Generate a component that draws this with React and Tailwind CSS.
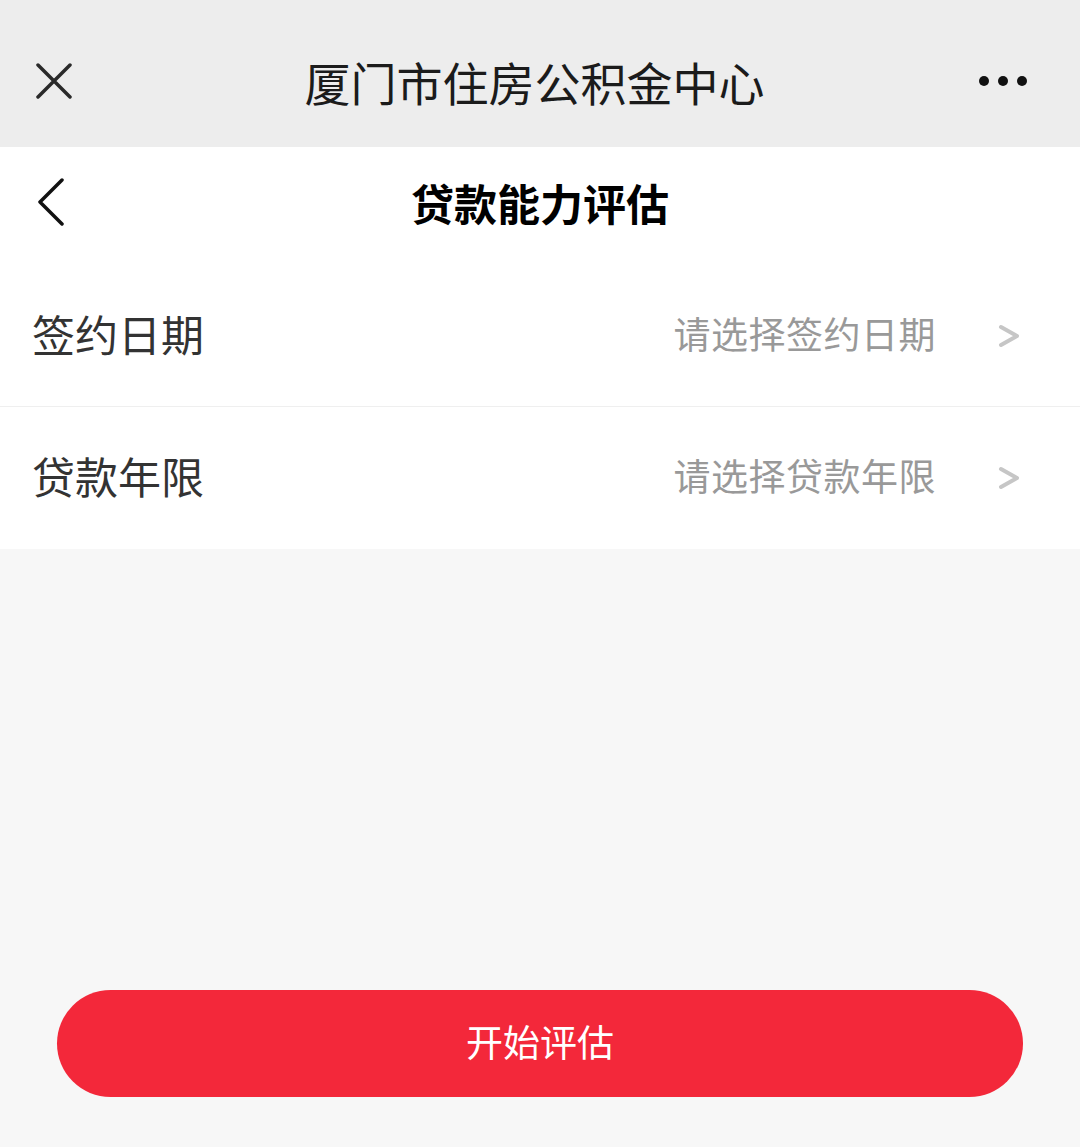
import { useState } from "react";

const cjk = { fontFamily: '"Noto Sans CJK SC", "Noto Sans", sans-serif' };

function Chevron() {
  return (
    <svg width="22" height="24" viewBox="0 0 22 24" className="shrink-0">
      <path d="M3 3 L19 12 L3 21" fill="none" stroke="#c6c6c6" strokeWidth="4" strokeLinecap="round" strokeLinejoin="round" />
    </svg>
  );
}

function PickerRow({ label, placeholder, border }) {
  return (
    <div className={`flex items-center h-[142px] pl-[32px] pr-[60px] pb-[5px] bg-white ${border ? "border-b border-[#efefef]" : ""}`}>
      <span className="text-[43px] text-[#333333] leading-none">{label}</span>
      <span className="ml-auto text-[37px] text-[#999999] leading-none tracking-[0.5px]">{placeholder}</span>
      <span className="ml-[62px] pt-[5px]">
        <Chevron />
      </span>
    </div>
  );
}

export default function App() {
  const [rows] = useState([
    { label: "签约日期", placeholder: "请选择签约日期" },
    { label: "贷款年限", placeholder: "请选择贷款年限" },
  ]);

  return (
    <div className="w-[1080px] h-[1147px] flex flex-col bg-[#f7f7f7] overflow-hidden" style={cjk}>
      {/* wechat top bar */}
      <div className="h-[147px] bg-[#ededed] flex items-center justify-between px-[36px] pt-[14px] shrink-0">
        <svg width="36" height="36" viewBox="0 0 36 36">
          <path d="M2 2 L34 34 M34 2 L2 34" stroke="#2a2a2a" strokeWidth="3.5" strokeLinecap="round" />
        </svg>
        <span className="text-[46px] text-[#1b1b1b] leading-none ml-[20px]">厦门市住房公积金中心</span>
        <svg width="52" height="12" viewBox="0 0 52 12" className="mr-[15px]">
          <circle cx="7" cy="6" r="5" fill="#111" />
          <circle cx="26" cy="6" r="5" fill="#111" />
          <circle cx="45" cy="6" r="5" fill="#111" />
        </svg>
      </div>

      {/* page header */}
      <div className="h-[118px] bg-white flex items-center relative shrink-0">
        <svg width="30" height="50" viewBox="0 0 30 50" className="ml-[36px] mt-[-6px]">
          <path d="M26 2 L4 24 L26 46" fill="none" stroke="#111" strokeWidth="3.5" strokeLinecap="round" strokeLinejoin="round" />
        </svg>
        <span className="absolute left-0 right-0 top-[34px] text-center text-[43px] font-bold text-black leading-none">贷款能力评估</span>
      </div>

      {/* form rows */}
      <div className="shrink-0">
        {rows.map((r, i) => (
          <PickerRow key={i} label={r.label} placeholder={r.placeholder} border={i === 0} />
        ))}
      </div>

      <div className="flex-1" />

      <div className="px-[57px] pb-[50px] shrink-0">
        <button className="w-full h-[107px] rounded-full bg-[#f3283a] text-white text-[37px] leading-none pb-[5px]" style={cjk}>
          开始评估
        </button>
      </div>
    </div>
  );
}
